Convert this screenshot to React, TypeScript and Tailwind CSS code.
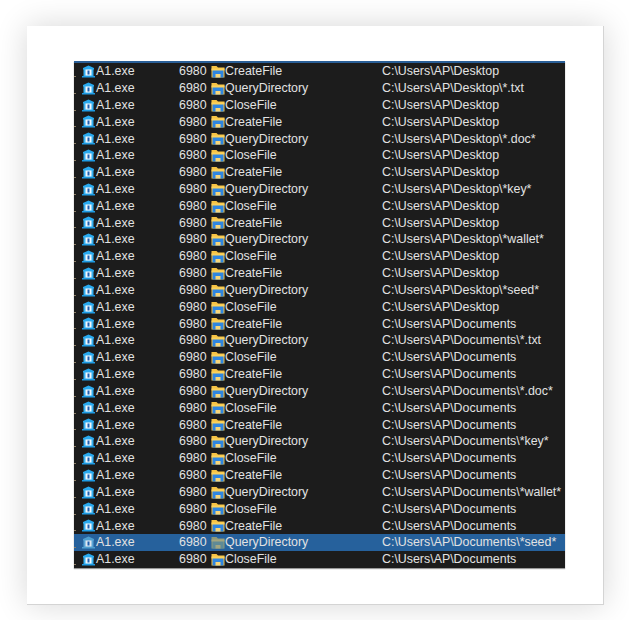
const PATTERNS = ['', '*.txt', '', '', '*.doc*', '', '', '*key*', '', '', '*wallet*', '', '', '*seed*', ''];
const OPS = ['CreateFile', 'QueryDirectory', 'CloseFile'];

const ROWS = ['Desktop', 'Documents'].flatMap((folder) =>
  PATTERNS.map((pattern, i) => ({
    op: OPS[i % 3],
    path: `C:\\Users\\AP\\${folder}${pattern ? `\\${pattern}` : ''}`,
  })),
);

function ExeIcon({ selected }: { selected: boolean }) {
  return (
    <svg width="14" height="13" viewBox="0 0 14 13" className="shrink-0">
      <path d="M6.5 0.5 L12 3 V4.5 H1 V3 Z" fill={selected ? '#4f9fd0' : '#29a9ee'} />
      <rect x="1.5" y="4" width="10" height="7" fill={selected ? '#5aa5d6' : '#35b1f2'} />
      <rect x="3.5" y="4.5" width="6" height="6" fill={selected ? '#dfe8f0' : '#f2f8fc'} />
      <rect x="5.5" y="5.5" width="2" height="4" fill="#1f5fb0" />
      <rect x="0" y="11" width="13" height="1.5" fill={selected ? '#4f9fd0' : '#1e9be4'} />
    </svg>
  );
}

function FolderIcon({ selected }: { selected: boolean }) {
  return (
    <svg width="14" height="13" viewBox="0 0 14 13" className="shrink-0">
      <path d="M0.5 1 H5.5 L7 2.5 H13.5 V12.5 H0.5 Z" fill={selected ? '#8f9a78' : '#f6c344'} />
      <rect x="1.5" y="4" width="11" height="8.5" fill={selected ? '#5f8a96' : '#2f86e0'} />
      <rect x="0.5" y="3.5" width="13" height="2" fill={selected ? '#a3a680' : '#fbd25c'} />
      <rect x="4.5" y="9" width="5" height="3.5" fill={selected ? '#a3a680' : '#f8d77a'} />
    </svg>
  );
}

export default function App() {
  return (
    <div className="w-[629px] h-[620px] bg-white pt-[26px] pl-[27px] overflow-hidden font-['Liberation_Sans',Arial,sans-serif]">
      <div className="w-[577px] h-[579px] bg-white border-r border-b border-[#d4d4d4] shadow-[0_0_30px_rgba(0,0,0,0.16)] pt-[35px] pl-[47px]">
        <div className="w-[491px] h-[507px] bg-[#1c1c1c] border-t-2 border-[#2a5f97] shadow-[0_1px_1px_rgba(0,0,0,0.4)]">
          {ROWS.map((row, i) => {
            const selected = i === 28;
            return (
              <div
                key={i}
                className={`relative flex items-center h-[16.83px] pl-[8px] text-[12.4px] leading-none text-[#e2e2e2] ${selected ? 'bg-[#26619c]' : ''}`}
              >
                {/* tick on the left edge */}
                <div className="absolute left-0 top-[13px] w-[2px] h-[1px] bg-[#8d7f68]" />
                <ExeIcon selected={selected} />
                <span className="w-[83px]">A1.exe</span>
                <span className="w-[32px]">6980</span>
                <FolderIcon selected={selected} />
                <span className="w-[157px]">{row.op}</span>
                <span>{row.path}</span>
              </div>
            );
          })}
        </div>
      </div>
    </div>
  );
}
